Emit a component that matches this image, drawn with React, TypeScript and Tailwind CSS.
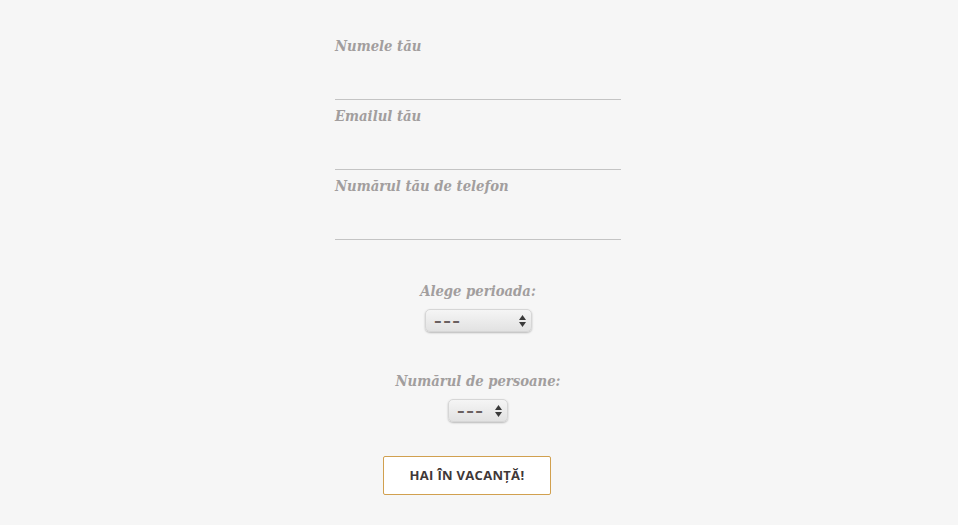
import React from 'react';

const labelFont = { fontFamily: '"DejaVu Serif Condensed", "DejaVu Serif", serif' };

const Field: React.FC<{ label: string }> = ({ label }) => (
  <label className="block h-[70px] border-b border-[#c4c4c4]">
    <span className="block pt-[6px] text-[14.7px] font-bold italic text-[#a29e9e] leading-[20px]" style={labelFont}>
      {label}
    </span>
    <input className="block w-full h-[40px] bg-transparent outline-none" />
  </label>
);

const SelectBox: React.FC<{ width: string }> = ({ width }) => (
  <div
    className={`relative ${width} h-[23px] mx-auto rounded-[5px] border border-[#d6d6d6] bg-gradient-to-b from-[#f5f5f5] to-[#e2e2e2] shadow-[0_1px_2px_rgba(0,0,0,0.25)]`}
  >
    <span
      className="absolute left-[8px] top-[1px] text-[16px] font-bold text-[#6a6060] leading-[20px] tracking-[1px] origin-left scale-x-[1.45]"
      style={{ fontFamily: '"Liberation Sans", sans-serif' }}
    >
      ---
    </span>
    <svg className="absolute right-[5px] top-[5px]" width="7" height="12" viewBox="0 0 7 12">
      <path d="M3.5 0 L7 5 H0 Z" fill="#3a3a3a" />
      <path d="M0 7 H7 L3.5 12 Z" fill="#3a3a3a" />
    </svg>
  </div>
);

export default function App() {
  return (
    <div className="min-h-[525px] bg-[#f6f6f6] pt-[30px]">
      <form className="w-[286px] ml-[335px]">
        <Field label="Numele tău" />
        <Field label="Emailul tău" />
        <Field label="Numărul tău de telefon" />

        <div className="mt-[40px] text-center">
          <p className="text-[14.7px] font-bold italic text-[#a29e9e] leading-[22px]" style={labelFont}>
            Alege perioada:
          </p>
          <div className="mt-[7px]">
            <SelectBox width="w-[107px]" />
          </div>
        </div>

        <div className="mt-[38px] text-center">
          <p className="text-[14.7px] font-bold italic text-[#a29e9e] leading-[22px]" style={labelFont}>
            Numărul de persoane:
          </p>
          <div className="mt-[7px]">
            <SelectBox width="w-[60px]" />
          </div>
        </div>

        <div className="mt-[34px] pl-[48px]">
          <button
            type="button"
            className="w-[168px] h-[39px] bg-white border border-[#d1a04f] rounded-[2px] text-[13px] font-bold text-[#3f3838] tracking-[0.3px]"
            style={{ fontFamily: '"Open Sans", "Liberation Sans", sans-serif' }}
          >
            HAI ÎN VACANȚĂ!
          </button>
        </div>
      </form>
    </div>
  );
}
